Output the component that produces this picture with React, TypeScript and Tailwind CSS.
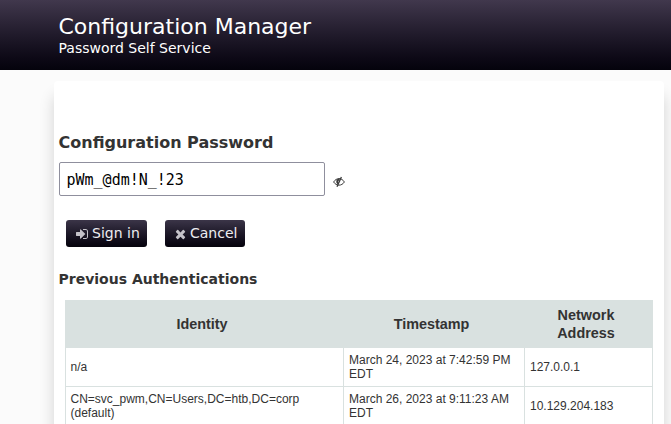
const SignIn = () => (
  <svg viewBox="0 0 1536 1792" className="mt-px h-[14px] w-[12px] fill-[#c4c2c9]">
    <path d="M1184 896q0 26-19 45l-544 544q-19 19-45 19t-45-19-19-45v-288h-448q-26 0-45-19t-19-45v-384q0-26 19-45t45-19h448v-288q0-26 19-45t45-19 45 19l544 544q19 19 19 45zm352-352v704q0 119-84.5 203.5t-203.5 84.5h-320q-13 0-22.5-9.5t-9.5-22.5q0-4-1-20t-.5-26.5 3-23.5 10-19.5 20.5-6.5h320q66 0 113-47t47-113v-704q0-66-47-113t-113-47h-312l-11.5-1-11.5-3-8-5.5-7-9-2-13.5q0-4-1-20t-.5-26.5 3-23.5 10-19.5 20.5-6.5h320q119 0 203.5 84.5t84.5 203.5z" />
  </svg>
);

const Times = () => (
  <svg viewBox="192 0 1408 1792" className="mt-px h-[14px] w-[11px] fill-[#c4c2c9]">
    <path d="M1490 1322q0 40-28 68l-136 136q-28 28-68 28t-68-28l-294-294-294 294q-28 28-68 28t-68-28l-136-136q-28-28-28-68t28-68l294-294-294-294q-28-28-28-68t28-68l136-136q28-28 68-28t68 28l294 294 294-294q28-28 68-28t68 28l136 136q28 28 28 68t-28 68l-294 294 294 294q28 28 28 68z" />
  </svg>
);

const EyeSlash = () => (
  <svg viewBox="0 0 12 12" className="ml-2 mt-[5px] size-3 fill-none stroke-[#3a3a3a]">
    <path d="M0.6 6C3.4 1.5 8.6 1.5 11.4 6C8.6 10.2 3.4 10.2 0.6 6Z" strokeWidth="1" />
    <path d="M6.6 3.4C4.4 3.2 3.4 5.6 5 7.6" strokeWidth="2" />
    <path d="M8.4 1L4 10.8" strokeWidth="1.3" />
  </svg>
);

const rows = [
  ["n/a", "March 24, 2023 at 7:42:59 PM EDT", "127.0.0.1"],
  ["CN=svc_pwm,CN=Users,DC=htb,DC=corp (default)", "March 26, 2023 at 9:11:23 AM EDT", "10.129.204.183"],
];

const button =
  "flex h-[27px] items-center rounded-[3px] bg-linear-to-b from-[#3b3548] to-[#05030c] text-[14px] text-[#ededf0]";

export default function App() {
  return (
    <div className="h-[424px] overflow-hidden bg-[#fbfbfb] font-['DejaVu_Sans',sans-serif] text-[#333]">
      <header className="h-[70px] bg-linear-to-b from-[#41384d] to-[#05030c] pt-[14px] pl-[58.5px] text-white">
        <div className="text-[22px] leading-[26px]">Configuration Manager</div>
        <div className="-mt-px text-[14px] leading-[18px]">Password Self Service</div>
      </header>
      <main className="mt-[11px] ml-[54px] h-[400px] w-[610px] rounded-[4px] bg-white pt-[52px] pl-[5px] shadow-[0_15px_15px_rgba(0,0,0,0.16)]">
        <h1 className="-ml-[0.5px] text-[16px] leading-[20px] font-bold">Configuration Password</h1>
        <div className="mt-[9px] flex items-center">
          <div className="h-[34px] w-[266px] rounded-[2px] border border-[#8f8f9d] pt-[8px] pl-[6.5px] font-['DejaVu_Sans_Mono',monospace] text-[15px] leading-[18px] text-black">
            pWm_@dm!N_!23
          </div>
          <EyeSlash />
        </div>
        <div className="mt-[24px] flex gap-[18px] pl-[7px]">
          <button className={`${button} w-[81px] gap-[4px] pl-[10px]`}>
            <SignIn />
            Sign in
          </button>
          <button className={`${button} w-[80px] gap-[4px] pl-[10px]`}>
            <Times />
            Cancel
          </button>
        </div>
        <h2 className="mt-[23px] -ml-[0.5px] text-[14px] leading-[18px] font-bold">Previous Authentications</h2>
        <table className="mt-[12px] ml-[6px] w-[587px] table-fixed border-collapse font-['Liberation_Sans',Arial,sans-serif] text-[12px] leading-[14px]">
          <colgroup>
            <col className="w-[278px]" />
            <col className="w-[181px]" />
            <col className="w-[128px]" />
          </colgroup>
          <thead>
            <tr className="h-[47px] bg-[#d9e1e0] text-[14.4px] leading-[18px]">
              <th className="border border-[#d9e1e0] pt-0 pb-px pr-[5px]">Identity</th>
              <th className="border border-[#d9e1e0] pt-0 pb-px pr-[5px]">Timestamp</th>
              <th className="border border-[#d9e1e0] pt-0 pr-[29px] pb-px pl-6">Network Address</th>
            </tr>
          </thead>
          <tbody>
            {rows.map((row) => (
              <tr key={row[2]} className="h-[39px]">
                {row.map((cell) => (
                  <td key={cell} className="border border-[#d9e1e0] py-0 pr-[4px] pl-[5px] first:pl-[4.5px]">
                    {cell}
                  </td>
                ))}
              </tr>
            ))}
          </tbody>
        </table>
      </main>
    </div>
  );
}
